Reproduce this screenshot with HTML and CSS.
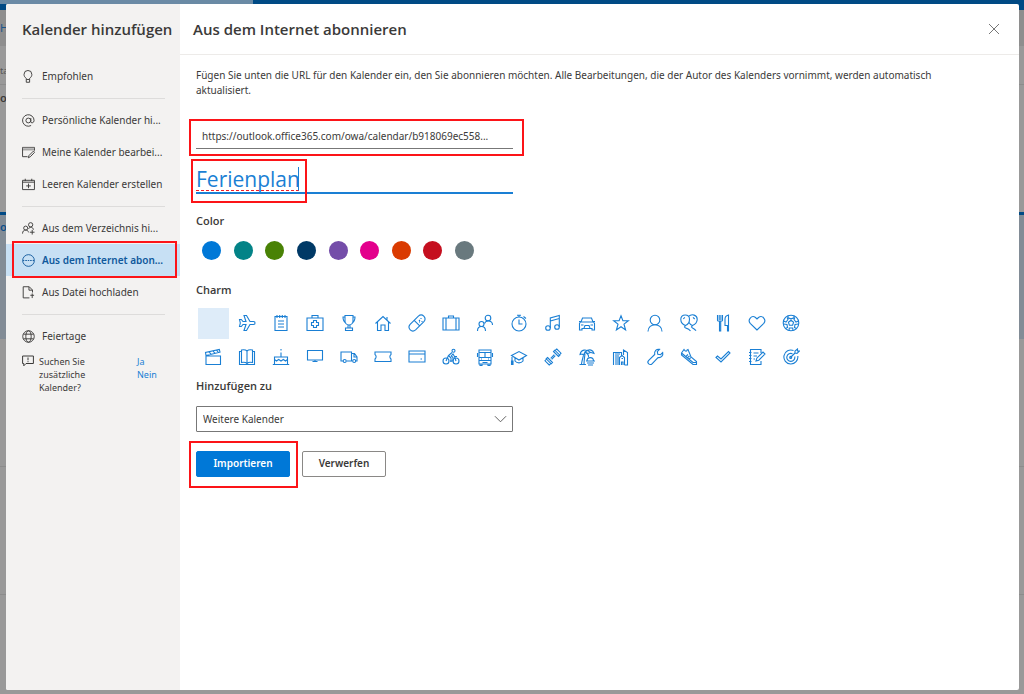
FILE: index.html
```html
<!DOCTYPE html>
<html lang="de">
<head>
<meta charset="utf-8">
<title>Kalender hinzufügen</title>
<link rel="stylesheet" href="styles.css">
</head>
<body>
<div class="backdrop" aria-hidden="true">
  <div class="bg-bar"><span class="bg-search"></span></div>
  <div class="bg-tools"><span>H</span></div>
  <div class="bg-tab">ta</div>
  <div class="bg-month">o</div>
  <div class="bg-day">o</div>
  <div class="bg-slot"></div>
  <div class="bg-slot"></div>
  <div class="bg-slot"></div>
</div>
<div class="dialog" role="dialog" aria-labelledby="dialog-title">
  <aside class="sidebar">
    <h1 id="dialog-title" class="sidebar-title">Kalender hinzufügen</h1>
    <nav class="nav">
      <button class="nav-item"><svg class="icon" viewBox="0 0 14 14"><path d="M4.600 10.200V9C3.200 7.900 2.200 6.900 2.200 4.700a4.200 4.200 0 0 1 8.400 0c0 2.200-1 3.200-2.400 4.300v1.200M4.600 10.200h3.600v3H4.600z"/></svg><span class="nav-label">Empfohlen</span></button>
      <hr class="divider">
      <button class="nav-item"><svg class="icon" viewBox="0 0 14 14"><circle cx="6.800" cy="7" r="2.600"/><path d="M9.500 4.300v4c0 1.800 3.500 1.700 3.500-1.300A6.200 6.200 0 1 0 9.800 12.400"/></svg><span class="nav-label">Persönliche Kalender hi...</span></button>
      <button class="nav-item"><svg class="icon" viewBox="0 0 14 14"><path d="M6 11.500H.6v-10h12.800V5M.6 4h12.800"/><path class="tint" d="M1 2h12v2H1z"/><path d="M6.800 12.700l.7-2.400L12.300 5.500l1.300 1.300-4.700 4.800z"/></svg><span class="nav-label">Meine Kalender bearbei...</span></button>
      <button class="nav-item"><svg class="icon" viewBox="0 0 14 14"><path d="M.6 2.500h12.800v10H.6zM.6 4.500h12.800M3.500.8v2.500M10.500.8v2.500M7 6v5M4.500 8.500h5"/></svg><span class="nav-label">Leeren Kalender erstellen</span></button>
      <hr class="divider">
      <button class="nav-item"><svg class="icon" viewBox="0 0 14 14"><circle cx="4" cy="6.600" r="2.200"/><path d="M.6 12.500c0-5 5.500-5 6.600-1.300"/><circle cx="9.300" cy="3" r="2.300"/><path d="M7 7.300c1.300-2.500 5-2 5.300 1M11 8.500v5M8.500 11h5"/></svg><span class="nav-label">Aus dem Verzeichnis hi...</span></button>
      <button class="nav-item selected annotated" aria-current="page"><svg class="icon" viewBox="0 0 14 14"><circle cx="7" cy="7" r="6.300"/><path d="M1 7h1.500M3.500 7h1.800M6.200 7h1.600M8.700 7h1.800M11.500 7H13"/></svg><span class="nav-label">Aus dem Internet abon...</span></button>
      <button class="nav-item"><svg class="icon" viewBox="0 0 14 14"><path d="M8 12.800H1.300V.8h6.500l3.500 3.500V7M7.500 1v3.500H11M11 8v5M9 10h4"/></svg><span class="nav-label">Aus Datei hochladen</span></button>
      <hr class="divider">
      <button class="nav-item"><svg class="icon" viewBox="0 0 14 14"><circle cx="7" cy="7" r="6.200"/><ellipse cx="7" cy="7" rx="2.900" ry="6.200"/><path d="M1.500 4.500h11M1.500 9.500h11"/></svg><span class="nav-label">Feiertage</span></button>
    </nav>
    <div class="feedback">
      <svg class="feedback-icon" viewBox="0 0 12 12"><path d="M.6 1h10.800v7.500H4L1.800 10.800V8.500H.6zM6 2.500v2.800M6 6.200v1"/></svg>
      <p class="feedback-text">Suchen Sie zusätzliche Kalender?</p>
      <div class="feedback-links"><a href="#ja">Ja</a><a href="#nein">Nein</a></div>
    </div>
  </aside>
  <main class="main">
    <header class="main-head">
      <h2 class="main-title">Aus dem Internet abonnieren</h2>
      <button class="close" aria-label="Schließen"><svg viewBox="0 0 12 12"><path d="M1 1l10 10M11 1L1 11"/></svg></button>
    </header>
    <form class="form">
      <p class="intro">Fügen Sie unten die URL für den Kalender ein, den Sie abonnieren möchten. Alle Bearbeitungen, die der Autor des Kalenders vornimmt, werden automatisch aktualisiert.</p>
      <div class="url-field annotated"><input class="url-input" type="text" aria-label="Kalender-URL" value="https://outlook.office365.com/owa/calendar/b918069ec558..."></div>
      <div class="name-field annotated"><input class="name-input" type="text" aria-label="Kalendername" value="Ferienplan"><span class="misspelled"></span></div>
      <h3 class="label">Color</h3>
      <div class="colors">
        <button type="button" class="swatch blue" aria-label="Blau"></button>
        <button type="button" class="swatch teal" aria-label="Blaugrün"></button>
        <button type="button" class="swatch green" aria-label="Grün"></button>
        <button type="button" class="swatch navy" aria-label="Dunkelblau"></button>
        <button type="button" class="swatch purple" aria-label="Violett"></button>
        <button type="button" class="swatch pink" aria-label="Pink"></button>
        <button type="button" class="swatch orange" aria-label="Orange"></button>
        <button type="button" class="swatch red" aria-label="Rot"></button>
        <button type="button" class="swatch gray" aria-label="Grau"></button>
      </div>
      <h3 class="label charm-label">Charm</h3>
      <div class="charms">
        <button type="button" class="charm chosen" aria-label="Kein Symbol"></button>
        <button type="button" class="charm" aria-label="Flugzeug"><svg viewBox="0 0 18 18"><path d="M1.500 5.500h1.800L5 7.500h3L6 1.500h2.500L12 7.500h3.500c2 0 2 3 0 3H12l-3.500 6H6l2-6H5l-1.700 2H1.500L2.300 9z"/></svg></button>
        <button type="button" class="charm" aria-label="Notizblock"><svg viewBox="0 0 18 18"><path d="M3 2.500h12v14H3zM5 1v3M7.700 1v3M10.300 1v3M13 1v3M6 7h6M6 10h6M6 13h6"/></svg></button>
        <button type="button" class="charm" aria-label="Erste Hilfe"><svg viewBox="0 0 18 18"><path d="M1 4h16v12.500H1zM6 4V1.500h6V4M7.500 6.500h3v2h2v3h-2v2h-3v-2h-2v-3h2z"/></svg></button>
        <button type="button" class="charm" aria-label="Pokal"><svg viewBox="0 0 18 18"><path d="M5 1.500h8V7c0 2-1.500 4-4 4S5 9 5 7zM5 3H3c0 3.500.8 5 3 6M13 3h2c0 3.500-.8 5-3 6M8 11v3M10 11v3M5.500 14h7v2.500h-7z"/></svg></button>
        <button type="button" class="charm" aria-label="Haus"><svg viewBox="0 0 18 18"><path d="M1.500 9.500L9 2.500l7.500 7M3.500 8v8.500H7V11h4v5.500h3.500V8M13 5.800V3"/></svg></button>
        <button type="button" class="charm" aria-label="Pille"><svg viewBox="0 0 18 18"><path d="M2.100 10.400l8.300-8.300c3.800-3.200 8.700 1.700 5.500 5.500l-8.300 8.300c-3.800 3.200-8.700-1.700-5.500-5.500zM6.200 6.300l5.500 5.500M11 6l1 1M13 4v1M14 7v1M11 8h1"/></svg></button>
        <button type="button" class="charm" aria-label="Koffer"><svg viewBox="0 0 18 18"><path d="M1 4h16v12H1zM4 4v12M14 4v12M6.500 4V2h5v2"/></svg></button>
        <button type="button" class="charm" aria-label="Personen"><svg viewBox="0 0 18 18"><circle cx="12" cy="4" r="2.800"/><circle cx="5.500" cy="10" r="2.500"/><path d="M1.500 17c0-6 8-6 8 0M8.500 9.500c1.500-4 8-3 8 1.500"/></svg></button>
        <button type="button" class="charm" aria-label="Stoppuhr"><svg viewBox="0 0 18 18"><circle cx="9" cy="10" r="7"/><path d="M9 5.500V10h3.500M7 1.200h4M9 1.200V3M13.500 2.500l2.500 2"/></svg></button>
        <button type="button" class="charm" aria-label="Musik"><svg viewBox="0 0 18 18"><circle cx="4" cy="14" r="2.300"/><circle cx="13" cy="13" r="2.300"/><path d="M6.300 14V4l9-2.500V13M6.300 7l9-2.500"/></svg></button>
        <button type="button" class="charm" aria-label="Auto"><svg viewBox="0 0 18 18"><path d="M1.500 9.500C2 8 3 8 3 8l1.500-4h9L15 8s1 0 1.500 1.500V16H14v-1.500H4V16H1.500zM3 8h12M1 7.500h2M15 7.500h2M3 11h2.500M12.500 11H15M6 14l1-2.500h4l1 2.500"/></svg></button>
        <button type="button" class="charm" aria-label="Stern"><svg viewBox="0 0 18 18"><path d="M9 1.800l1.900 5h5.400l-4.300 3.300 1.600 5.900L9 12.700 4.400 16 6 10.100 1.700 6.800h5.400z"/></svg></button>
        <button type="button" class="charm" aria-label="Person"><svg viewBox="0 0 18 18"><circle cx="9" cy="6" r="4.800"/><path d="M2 17.500c0-9 14-9 14 0"/></svg></button>
        <button type="button" class="charm" aria-label="Ballons"><svg viewBox="0 0 18 18"><path d="M5.500 11.500C2.500 10.500.8 8 .8 5.300S2.500 1 5.200 1s4.300 1.700 4.300 4.300c0 2.700-1.300 5.200-4 6.200zM8.500 2.500c3.500-3.300 8.700-1.300 8.700 2.800 0 3-2.200 5.200-4.700 6.200-2-.5-3-2-3.800-3.500M5.500 11.500L4.500 13c1.500 2.500 3 0 6 4M12.500 11.500l-1 1.500c1.500 2 2.500 1 4.500 3.800M4.800 3.300L3.300 5M13 3.300l1.700 1.700"/></svg></button>
        <button type="button" class="charm" aria-label="Besteck"><svg viewBox="0 0 18 18"><path d="M3.500 1v5.500c0 1 5 1 5 0V1M5.200 1v5M6.900 1v5M5.500 7v10h1.200V7M14.500 1v16h-1v-5.500H11V5c0-2 1.500-3.500 3.500-4z"/></svg></button>
        <button type="button" class="charm" aria-label="Herz"><svg viewBox="0 0 18 18"><path d="M9 16L2.200 9.300C-.7 6 3.500.5 7.500 3.500L9 5l1.500-1.500c4-3 8.200 2.500 5.300 5.800z"/></svg></button>
        <button type="button" class="charm" aria-label="Fußball"><svg viewBox="0 0 18 18"><circle cx="9" cy="9" r="7.800"/><path d="M9 6.300l2.600 1.900-1 3H7.400l-1-3zM6 1.800v2l3 1 3-1v-2M1.500 7L4 8l2-2.500-.8-2M16.500 7L14 8l-2-2.500.8-2M3.500 14.500l2-1-.5-3L1.500 10M14.500 14.500l-2-1 .5-3 3.500-.5M7 16.500l.3-2.500h3.400l.3 2.500"/></svg></button>
        <button type="button" class="charm" aria-label="Film"><svg viewBox="0 0 18 18"><path d="M2 8h14.500v8.500H2zM2 7.500L1.500 4.500l13.800-3 .7 2.700zM5 3.800l2 2.300M9 3l2 2.300M12.500 2.200l2 2.300"/></svg></button>
        <button type="button" class="charm" aria-label="Buch"><svg viewBox="0 0 18 18"><path d="M3.500 2C6 1.500 8 2 9 3c1-1 3-1.500 5.500-1v12.500c-2.500-.5-4.500 0-5.500 1-1-1-3-1.500-5.500-1zM9 3v12.500M3.500 3.500h-2v13h15v-13h-2"/></svg></button>
        <button type="button" class="charm" aria-label="Geburtstag"><svg viewBox="0 0 18 18"><path d="M.8 16.500h16.400M2.500 16.500V9h13v7.500M2.500 11.500l2 1.500 2.200-1.500L9 13l2.300-1.500 2.200 1.500 2-1.500M9 9V4.500M9 1v1.500"/></svg></button>
        <button type="button" class="charm" aria-label="Bildschirm"><svg viewBox="0 0 18 18"><path d="M1.500 2.500h15v9.500h-15zM6.500 13.500h5M9 12v1.500"/></svg></button>
        <button type="button" class="charm" aria-label="Lieferwagen"><svg viewBox="0 0 18 18"><path d="M3 13H1V4h10.500v9H6.500M11.500 5.500h3L17 9v4h-1M11.500 13h1M14 5.500V9h3"/><circle cx="4.700" cy="13" r="1.500"/><circle cx="14.200" cy="13" r="1.500"/></svg></button>
        <button type="button" class="charm" aria-label="Ticket"><svg viewBox="0 0 18 18"><path d="M1 4h16v2.500c-1.500 1-1.500 3.500 0 4.500v2.500H1V11c1.500-1 1.500-3.500 0-4.500z"/></svg></button>
        <button type="button" class="charm" aria-label="Kreditkarte"><svg viewBox="0 0 18 18"><path d="M1 3h16v11H1zM1 6h16M12.500 11h1.500"/></svg></button>
        <button type="button" class="charm" aria-label="Radfahrer"><svg viewBox="0 0 18 18"><circle cx="4" cy="13" r="3"/><circle cx="14" cy="13" r="3"/><circle cx="11.500" cy="2.800" r="1.500"/><path d="M10 4.500L6.500 7.500 9 10v4M8 13h3V9.500L9.300 8l1.700-2 1.500 2.500H15M6.500 7.500L4 13M12.500 8.500L14 13"/></svg></button>
        <button type="button" class="charm" aria-label="Bus"><svg viewBox="0 0 18 18"><path d="M3 2h12v14H3zM3 4.500h12M3 9.500h12M9 4.500v5M1.500 5v4M16.500 5v4M3 12.500h12M5 11h1M12 11h1M6.500 14.500h5M4 16v1.500h2V16M12 16v1.500h2V16"/></svg></button>
        <button type="button" class="charm" aria-label="Abschluss"><svg viewBox="0 0 18 18"><path d="M1.500 7.500L9 3.500l7.500 4L9 12zM5 9.500V13c2 2.500 6 2.500 8 0V9.500M2 7.500V16M1.500 13h1.500v3.500H1.500z"/></svg></button>
        <button type="button" class="charm" aria-label="Hantel"><svg viewBox="0 0 18 18"><path d="M6.700 10.300l3.600-3.600M7.700 11.300l3.600-3.600M9.500 3.500l5 5 1.300-1.300-5-5zM11.500 2l1.300-1L17 5.200l-1 1.300M3.500 9.500l5 5-1.300 1.300-5-5zM2 11.500l-1 1.300L5.200 17l1.300-1"/></svg></button>
        <button type="button" class="charm" aria-label="Strand"><svg viewBox="0 0 18 18"><path d="M2 6.500C3 1.500 8 .5 12.500 4.500L10 5.500 7 4 5.500 7 4 6zM7 4c5-4 8-1.500 9 1.500l-3-1M7 4c3 2 4 3 3.500 5M5.500 7C5 10 4 12 3.500 16M7 5.500C6.500 10 6 13 6 16M1.500 16.500H8M9 13c0-4.500 6.500-4.500 6.500 0M8 13h9M9 15h7M10 17h5"/></svg></button>
        <button type="button" class="charm" aria-label="Gebäude"><svg viewBox="0 0 18 18"><path d="M1.500 17V4.500h8V8M4 7v10M6 7v10M11.500 7V2l4 2.500V17h-3M7.500 17V9.500L10 7.500l2.500 2V17M9.500 17v-3h1.500v3M3 6h5M9.500 10.500h1.500"/></svg></button>
        <button type="button" class="charm" aria-label="Schraubenschlüssel"><svg viewBox="0 0 18 18"><path d="M13.500 1.300L11.300 3.500l.5 2.700 2.700.5 2.200-2.200c.8 3-1.700 5.700-4.700 5L6 15.800c-2 2.200-5.500-1-3.500-3.200L8.700 6.500C8 3.300 10.500.7 13.500 1.300z"/></svg></button>
        <button type="button" class="charm" aria-label="Laufschuh"><svg viewBox="0 0 18 18"><path d="M1.500 5L4 1.500C5.500 4 7 3.500 7 2l1-.5L11 9l5.500 4.500v3H13L1.500 7zM1.500 5L13 14.500h3.500M8 6.500L6.300 8M9.500 8L7.700 9.500M10.700 9.700L9.200 11"/></svg></button>
        <button type="button" class="charm" aria-label="Häkchen"><svg viewBox="0 0 18 18"><path d="M2 9.500L3.500 8 7 11l7.500-7.500L16 5l-9 9z"/></svg></button>
        <button type="button" class="charm" aria-label="Notiz"><svg viewBox="0 0 18 18"><path d="M13 5V1.500H2.500v15H13V13M1 4.500h2.500M1 7.500h2.500M1 10.500h2.500M1 13.500h2.500M5.500 5h5M5.500 8H9M5.500 11H7M8 13l.8-2.800L15 4l2 2-6.200 6.200z"/></svg></button>
        <button type="button" class="charm" aria-label="Ziel"><svg viewBox="0 0 18 18"><path d="M11.500 2.500A7 7 0 1 0 15.800 8M10.500 5.800A4 4 0 1 0 12.700 8.500M8.500 9.500l5-5M13 5V3l2.500-2v2h2L15 5.300z"/><circle cx="8.700" cy="9.400" r="1"/></svg></button>
      </div>
      <label class="label" for="group">Hinzufügen zu</label>
      <div class="select-wrap">
        <select id="group" class="select"><option>Weitere Kalender</option></select>
        <svg class="chevron" viewBox="0 0 14 8"><path d="M1 1l6 6 6-6"/></svg>
      </div>
      <div class="actions">
        <div class="annotated import-wrap"><button type="button" class="btn primary">Importieren</button></div>
        <button type="button" class="btn">Verwerfen</button>
      </div>
    </form>
  </main>
</div>
</body>
</html>
```
FILE: styles.css
```css
*, *::after { box-sizing: border-box; }
body {
  margin: 0;
  min-height: 100vh;
  display: flex;
  padding: 4px 5px 4px 6px;
  background: #999;
  color: #3b3a39;
  font: 10px/15px "Noto Sans", "Open Sans", sans-serif;
}
button, input, select { font: inherit; color: inherit; margin: 0; }
button { padding: 0; border: 0; background: none; }
h1, h2, h3, p { margin: 0; }
svg { fill: none; stroke: currentColor; stroke-width: 1; display: block; flex: none; }

/* dimmed calendar behind the dialog */
.backdrop {
  position: absolute;
  inset: 0;
  overflow: hidden;
  display: flex;
  flex-direction: column;
  font-size: 11px;
}
.backdrop > * { flex: none; }
.bg-bar { height: 10px; background: #004a85; }
.bg-search { display: block; width: 253px; height: 4px; background: #6a8aa5; }
.bg-tools { height: 36px; padding-top: 10px; background: #8e8e8e; color: #1b558a; }
.bg-tab { height: 39px; padding-top: 17px; border-bottom: 1px solid #8c8c8c; color: #555; font-size: 9px; }
.bg-month { height: 127px; padding-top: 5px; font-weight: 600; }
.bg-day { height: 127px; padding-top: 4px; border-top: 3px solid #004a85; background: #828c96; color: #0b4e8a; font-weight: 600; }
.bg-slot { height: 128px; border-bottom: 1px solid #8c8c8c; }

.dialog {
  position: relative;
  flex: 1;
  display: flex;
  overflow: hidden;
  border-radius: 2px;
  background: #fff;
}

.sidebar { width: 174px; flex: none; background: #f3f2f1; }
.sidebar-title { padding: 14px 0 0 16px; font: 600 15px/22px "Open Sans", "Noto Sans", sans-serif; white-space: nowrap; }
.nav { display: flex; flex-direction: column; padding-top: 20px; }
.nav-item {
  display: flex;
  align-items: center;
  gap: 7px;
  height: 32px;
  padding-left: 16px;
  text-align: left;
  white-space: nowrap;
}
.nav-item.selected { background: #c7e0f4; color: #10599c; font-weight: 600; }
.icon { width: 13px; height: 13px; }
.tint { fill: #bbb; stroke: none; }
.divider { width: 143px; height: 1px; margin: 6px 0 5px 16px; border: 0; background: #dddcdb; }
.feedback { display: flex; padding: 3px 0 0 16px; font-size: 9px; line-height: 13px; }
.feedback-icon { width: 12px; height: 12px; }
.feedback-text { width: 70px; margin-left: 5px; }
.feedback-links { display: flex; flex-direction: column; margin-left: 28px; }
.feedback-links a { color: #1a7fd4; text-decoration: none; }

.main { flex: 1; min-width: 0; }
.main-head {
  display: flex;
  align-items: center;
  justify-content: space-between;
  height: 51px;
  padding: 0 19px 0 13px;
  border-bottom: 1px solid #edebe9;
}
.main-title { font: 600 15px/22px "Open Sans", "Noto Sans", sans-serif; }
.close { color: #777; }
.close svg { width: 12px; height: 12px; }
.form { display: flex; flex-direction: column; align-items: flex-start; padding: 13px 16px; }
.intro { max-width: 770px; }

/* red marker frames */
.annotated { position: relative; }
.annotated::after { content: ""; position: absolute; border: 2px solid #fc1418; pointer-events: none; }
.nav-item.annotated::after { inset: -3px 3px -2px 6px; }
.url-field.annotated::after { inset: -5px -11px -7px -7px; }
.name-field.annotated::after { top: -6px; left: -5px; width: 116px; height: 44px; }
.import-wrap.annotated::after { inset: -10px -8px -11px -7px; }

.url-field, .name-field, .select-wrap { width: 317px; }
.url-field { margin-top: 26px; }
.url-input { display: block; width: 100%; height: 25px; padding: 0 6px; border: 0; border-bottom: 1px solid #777; outline: 0; background: none; }
.name-field { margin-top: 16px; }
.name-input {
  display: block;
  width: 100%;
  height: 29px;
  padding: 0;
  border: 0;
  border-bottom: 2px solid #1a7fd4;
  outline: 0;
  background: none;
  color: #1a7fd4;
  font: 21px "Open Sans", "Noto Sans", sans-serif;
}
.misspelled { position: absolute; left: 0; top: 2px; width: 103px; height: 24px; border-right: 1px solid #1a7fd4; border-bottom: 1px dashed #f0202c; }
.label { margin-top: 19px; font: 600 11px/16px "Open Sans", "Noto Sans", sans-serif; }
.colors { display: flex; justify-content: space-between; width: 272px; margin: 12px 0 0 6px; }
.swatch { width: 19px; height: 19px; border-radius: 50%; }
.blue { background: #0078d7; }
.teal { background: #038387; }
.green { background: #498205; }
.navy { background: #003966; }
.purple { background: #744da9; }
.pink { background: #e3008c; }
.orange { background: #da3b01; }
.red { background: #c50f1f; }
.gray { background: #69797e; }
.charm-label { margin-top: 22px; }
.charms { display: grid; grid-template-columns: repeat(18, 34px); grid-auto-rows: 34px; margin-top: 8px; }
.charm { display: flex; align-items: center; justify-content: center; color: #1a7fd4; }
.charm svg { width: 18px; height: 18px; stroke-width: 1.1; }
.charm.chosen { width: 31px; height: 31px; place-self: center; background: #deecf9; }
.charms + .label { margin-top: 4px; }
.select-wrap { position: relative; margin-top: 12px; }
.select { display: block; width: 100%; height: 26px; padding: 0 6px; border: 1px solid #777; border-radius: 1px; background: none; appearance: none; }
.chevron { position: absolute; right: 6px; top: 9px; width: 13px; height: 8px; color: #555; pointer-events: none; }
.actions { display: flex; gap: 12px; margin-top: 19px; }
.btn { display: block; width: 84px; height: 26px; padding-bottom: 1px; border: 1px solid #8a8886; border-radius: 2px; font-weight: 600; }
.btn.primary { width: 94px; border-color: #0078d7; background: #0078d7; color: #fff; }
```
